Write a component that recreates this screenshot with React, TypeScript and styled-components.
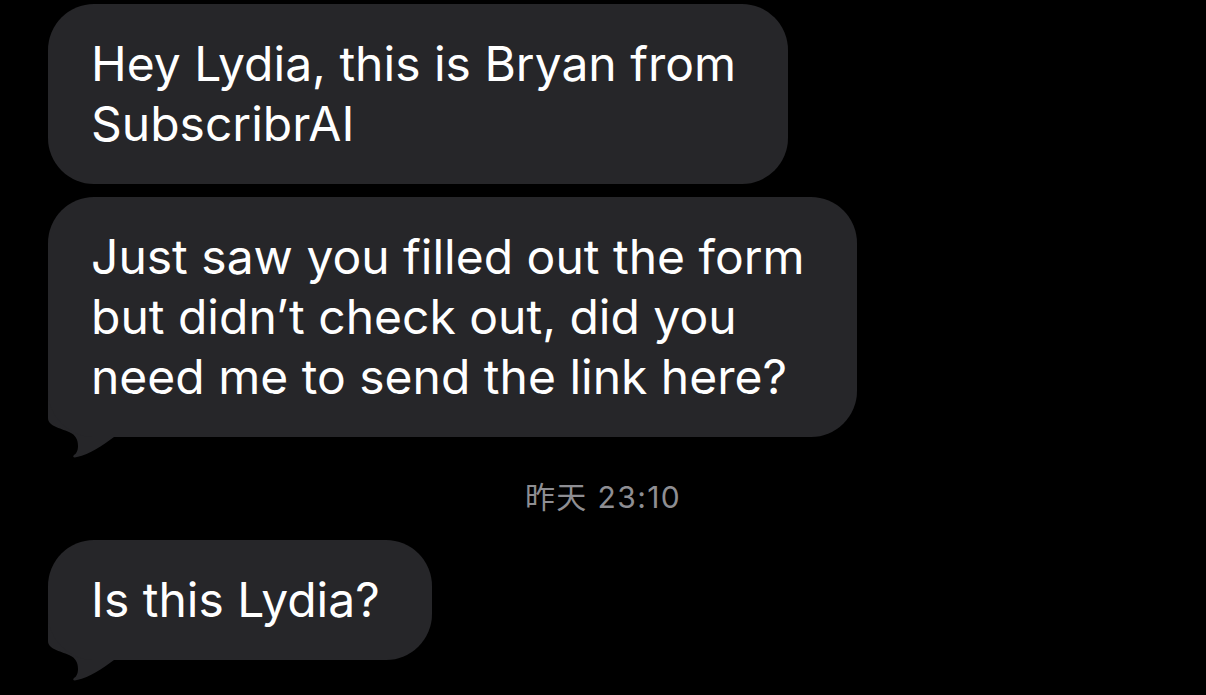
import React from 'react';
import styled, { createGlobalStyle } from 'styled-components';

const GlobalStyle = createGlobalStyle`
  html, body {
    margin: 0;
    padding: 0;
    background: #000;
  }
  body {
    font-family: Inter, "Noto Sans", "Noto Sans CJK SC", sans-serif;
    -webkit-font-smoothing: antialiased;
  }
`;

const Screen = styled.div`
  width: 1206px;
  height: 695px;
  overflow: hidden;
  background: #000;
  padding: 4px 0 0 48px;
  box-sizing: border-box;
  display: flex;
  flex-direction: column;
  align-items: flex-start;
`;

const BubbleWrap = styled.div<{ $gap: number }>`
  position: relative;
  margin-top: ${p => p.$gap}px;
`;

const Bubble = styled.div`
  position: relative;
  z-index: 1;
  background: #262629;
  color: #fff;
  border-radius: 46px;
  padding: 30px 52px 30px 43px;
  font-size: 48px;
  line-height: 60px;
  white-space: nowrap;
`;

// the little curled tail under the last bubble of a group
const Tail = styled.svg`
  position: absolute;
  left: 0;
  bottom: -21px;
  width: 80px;
  height: 90px;
  z-index: 0;
`;

const Stamp = styled.div`
  align-self: stretch;
  margin: 42px 48px 0 0;
  text-align: center;
  color: #8e8e93;
  font-size: 30px;
  line-height: 36px;
  letter-spacing: 1.4px;
  font-family: Inter, "Noto Sans CJK SC", sans-serif;
`;

type MsgProps = { lines: string[]; tail?: boolean; gap: number };

function Message({ lines, tail, gap }: MsgProps) {
  return (
    <BubbleWrap $gap={gap}>
      {tail && (
        <Tail viewBox="0 0 80 90">
          <path
            d="M0 0 L0 50 C0 58 12 60 21 64 C28 67 30 72 30 78 C30 83 28 86 26 87 C24 89 26 90 29 89 C42 86 54 78 66 69 L66 0 Z"
            fill="#262629"
          />
        </Tail>
      )}
      <Bubble>
        {lines.map((l, i) => (
          <React.Fragment key={i}>
            {i > 0 && <br />}
            {l}
          </React.Fragment>
        ))}
      </Bubble>
    </BubbleWrap>
  );
}

export default function App() {
  return (
    <>
      <GlobalStyle />
      <Screen>
        <Message gap={0} lines={['Hey Lydia, this is Bryan from', 'SubscribrAI']} />
        <Message
          gap={13}
          tail
          lines={[
            'Just saw you filled out the form',
            'but didn\u2019t check out, did you',
            'need me to send the link here?',
          ]}
        />
        <Stamp>昨天 23:10</Stamp>
        <Message gap={25} tail lines={['Is this Lydia?']} />
      </Screen>
    </>
  );
}
